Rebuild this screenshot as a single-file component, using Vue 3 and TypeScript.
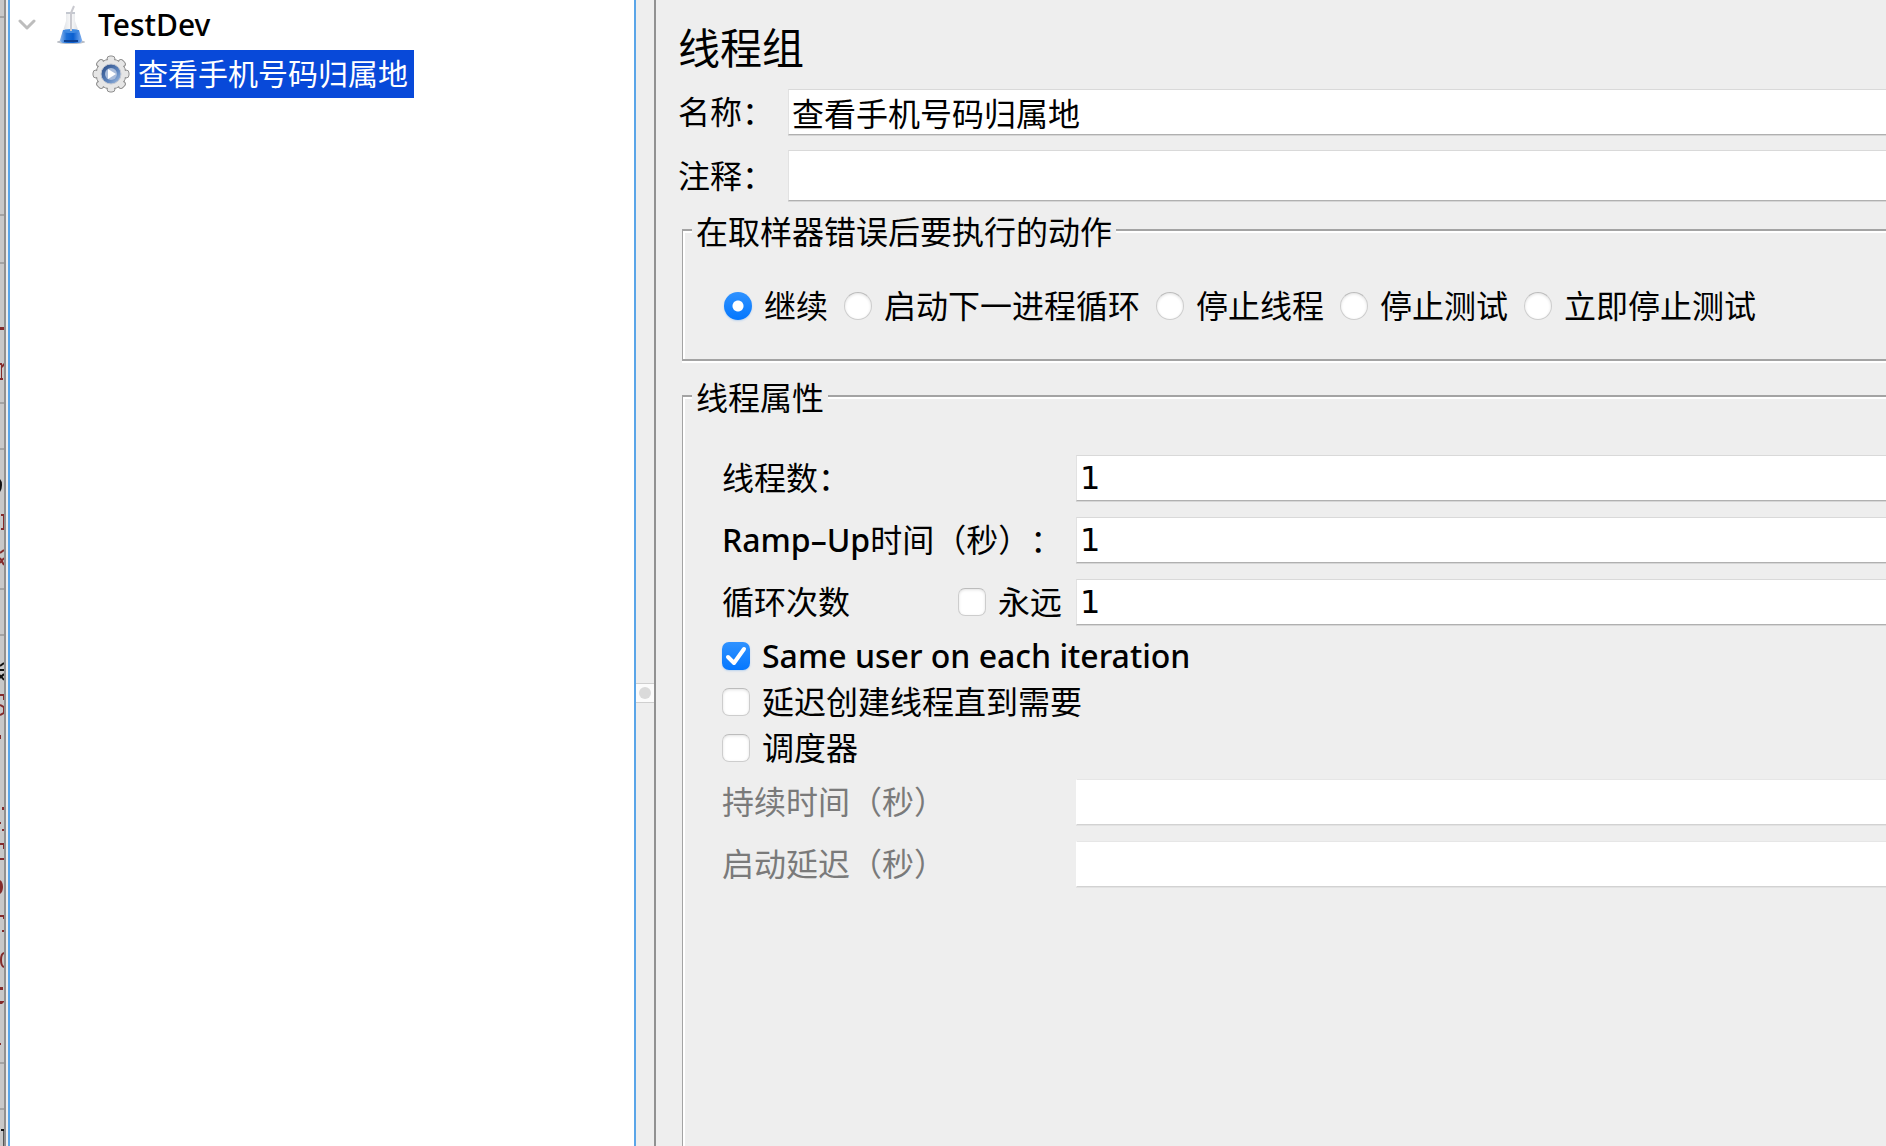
<script setup lang="ts">
import { ref } from 'vue'

interface Option {
  value: string
  label: string
}

const name = ref('查看手机号码归属地')
const comment = ref('')
const expanded = ref(true)

const actions: Option[] = [
  { value: 'continue', label: '继续' },
  { value: 'next-loop', label: '启动下一进程循环' },
  { value: 'stop-thread', label: '停止线程' },
  { value: 'stop-test', label: '停止测试' },
  { value: 'stop-now', label: '立即停止测试' },
]
const action = ref('continue')

const threads = ref('1')
const rampUp = ref('1')
const loops = ref('1')
const forever = ref(false)
const sameUser = ref(true)
const delayedStart = ref(false)
const scheduler = ref(false)
const duration = ref('')
const startupDelay = ref('')

const ruleLines = [16, 214, 262, 402, 448, 588, 634, 1062, 1108]
</script>

<template>
  <div class="app" lang="zh-CN">
    <!-- Sliver of the window lying behind this one -->
    <div class="backdrop" aria-hidden="true">
      <svg width="4" height="1146" viewBox="0 0 4 1146">
        <rect v-for="y in ruleLines" :key="y" x="0" :y="y" width="4" height="2" fill="#a3a3a3" />
        <g fill="#852b2b">
          <rect x="0" y="327" width="4" height="3" />
          <path d="M0 363h2v2l2-2v3l-2 2v10h1v2h-3v-2h1v-13h-1z" />
          <path d="M1 514h3v16h-3v-2h2v-12h-2z" />
          <rect x="0" y="735" width="1" height="4" />
          <rect x="2" y="807" width="2" height="3" />
          <rect x="0" y="822" width="1" height="2" />
          <rect x="2" y="829" width="2" height="2" />
          <path d="M0 843h4v6h-1v-4h-3z" />
          <path d="M0 858h4v2h-4z" />
          <path d="M0 880q3 2 3 7t-3 7z" />
          <path d="M0 915h4v4h-1v-2h-3z" />
          <rect x="2" y="930" width="2" height="2" />
          <rect x="0" y="987" width="3" height="3" />
          <path d="M0 1001h4v1l-2 2h-2z" />
          <rect x="0" y="1043" width="1" height="2" />
        </g>
        <g fill="none" stroke="#852b2b" stroke-width="2">
          <path d="M4 550l-4 3M0 558l4 7M4 558l-4 5" />
          <path d="M0 695h4v5M0 705l4 2v6l-4 2" />
          <path d="M4 953q-3 1-3 7t3 7" />
        </g>
        <g fill="none" stroke="#111" stroke-width="2">
          <path d="M4 663l-4 3M0 670h4M0 675l4 5M4 674l-4 4" />
          <path d="M1 1130h3" />
        </g>
        <path d="M3 1131h1v15h-1z" fill="#555" />
        <path d="M0 479q2 2 2 6t-2 7z" fill="#111" />
      </svg>
    </div>

    <nav class="tree-pane" aria-label="测试计划">
      <ul class="tree">
        <li>
          <div class="node">
            <button class="toggle" type="button" aria-label="展开" :aria-expanded="expanded" @click="expanded = !expanded">
              <svg width="18" height="12" viewBox="0 0 18 12">
                <path d="M2 2l7 7 7-7" fill="none" stroke="#bdbdbd" stroke-width="3" stroke-linecap="round" stroke-linejoin="round" />
              </svg>
            </button>
            <svg class="flask" width="30" height="40" viewBox="0 0 30 40">
              <defs>
                <linearGradient id="flask-liquid" x1="0" x2="1">
                  <stop offset="0" stop-color="#8fb9ee" />
                  <stop offset=".3" stop-color="#1c6fd6" />
                  <stop offset=".6" stop-color="#0a5fd0" />
                  <stop offset="1" stop-color="#7fb0f0" />
                </linearGradient>
                <linearGradient id="flask-glass" x1="0" x2="1">
                  <stop offset="0" stop-color="#d4d8de" />
                  <stop offset=".5" stop-color="#fafafa" />
                  <stop offset="1" stop-color="#cfd3da" />
                </linearGradient>
              </defs>
              <ellipse cx="14" cy="37" rx="14" ry="2" fill="#b8bcc4" />
              <path d="M9 8h9v8l7 20q0 2-3 2h-16q-3 0-3-2l6-20z" fill="url(#flask-glass)" />
              <path d="M6 25h16l3 10q0 3-3 3h-16q-3 0-3-3z" fill="url(#flask-liquid)" />
              <ellipse cx="14" cy="26" rx="8" ry="2" fill="#3f8ae2" />
              <path d="M7 36h14" stroke="#0c3f92" stroke-width="2" />
              <path d="M9 8h9" stroke="#c4c8d0" stroke-width="2" />
              <path d="M17 1l-3 7v18" fill="none" stroke="#c9c9cf" stroke-width="2" />
            </svg>
            <span class="node-label latin">TestDev</span>
          </div>
          <ul v-if="expanded" class="tree">
            <li class="node child">
              <svg width="38" height="38" viewBox="0 0 38 38">
                <defs>
                  <linearGradient id="gear-hub" x1="0" y1="0" x2="1" y2="1">
                    <stop offset="0" stop-color="#25467f" />
                    <stop offset=".6" stop-color="#5f86bf" />
                    <stop offset="1" stop-color="#a9c3e4" />
                  </linearGradient>
                </defs>
                <g fill="#e6e6e6" stroke="#8f8f8f" stroke-width="1">
                  <rect v-for="a in 8" :key="a" x="15" y="1" width="8" height="10" rx="3" :transform="`rotate(${a * 45} 19 19)`" />
                  <circle cx="19" cy="19" r="15" />
                </g>
                <g fill="#e6e6e6">
                  <rect v-for="a in 8" :key="a" x="16" y="2" width="6" height="10" rx="2" :transform="`rotate(${a * 45} 19 19)`" />
                </g>
                <circle cx="19" cy="19" r="10" fill="url(#gear-hub)" stroke="#c3c8d2" stroke-width="1" />
                <circle cx="19" cy="19" r="6" fill="#a9bcda" />
                <path d="M16 14l8 5-8 5z" fill="#fff" />
              </svg>
              <span class="node-label selected">查看手机号码归属地</span>
            </li>
          </ul>
        </li>
      </ul>
    </nav>

    <div class="splitter" role="separator" aria-orientation="vertical">
      <div class="grip"><span class="dot"></span></div>
    </div>

    <main class="panel">
      <h1 class="title">线程组</h1>

      <div class="meta-row">
        <label for="name">名称：</label>
        <input id="name" v-model="name" class="field" type="text" />
      </div>
      <div class="meta-row">
        <label for="comment">注释：</label>
        <input id="comment" v-model="comment" class="field tall" type="text" />
      </div>

      <fieldset class="group">
        <legend>在取样器错误后要执行的动作</legend>
        <div class="radios">
          <label v-for="o in actions" :key="o.value" class="option">
            <input v-model="action" class="tick round" type="radio" name="on-error" :value="o.value" />
            <span>{{ o.label }}</span>
          </label>
        </div>
      </fieldset>

      <fieldset class="group fill">
        <legend>线程属性</legend>
        <div class="props">
          <div class="prop-row">
            <label class="prop-label" for="threads">线程数：</label>
            <input id="threads" v-model="threads" class="field number" type="text" />
          </div>
          <div class="prop-row">
            <label class="prop-label" for="ramp-up"><span class="latin">Ramp–Up</span>时间（秒）：</label>
            <input id="ramp-up" v-model="rampUp" class="field number" type="text" />
          </div>
          <div class="prop-row">
            <div class="prop-label with-check">
              <label for="loops">循环次数</label>
              <label class="option">
                <input v-model="forever" class="tick" type="checkbox" />
                <span>永远</span>
              </label>
            </div>
            <input id="loops" v-model="loops" class="field number" type="text" />
          </div>
          <div class="checks">
            <label class="option">
              <input v-model="sameUser" class="tick" type="checkbox" />
              <span class="latin">Same user on each iteration</span>
            </label>
            <label class="option">
              <input v-model="delayedStart" class="tick" type="checkbox" />
              <span>延迟创建线程直到需要</span>
            </label>
            <label class="option">
              <input v-model="scheduler" class="tick" type="checkbox" />
              <span>调度器</span>
            </label>
          </div>
          <div class="prop-row">
            <label class="prop-label off" for="duration">持续时间（秒）</label>
            <input id="duration" v-model="duration" class="field number" type="text" :disabled="!scheduler" />
          </div>
          <div class="prop-row">
            <label class="prop-label off" for="delay">启动延迟（秒）</label>
            <input id="delay" v-model="startupDelay" class="field number" type="text" :disabled="!scheduler" />
          </div>
        </div>
      </fieldset>
    </main>
  </div>
</template>

<style>
body {
  margin: 0;
  background: #eee;
}
</style>

<style scoped>
.app {
  display: flex;
  height: 100vh;
  overflow: hidden;
  background: #eee;
  color: #000;
  font-family: 'Noto Sans', 'Noto Sans CJK SC', sans-serif;
  font-size: 32px;
  line-height: 36px;
  white-space: nowrap;
  text-spacing-trim: space-all;
}

.latin {
  font-weight: 500;
}

.backdrop {
  flex: none;
  width: 4px;
  overflow: hidden;
  background: #c8c8c8;
  border-right: 2px solid #909090;
}

.backdrop svg {
  display: block;
}

.tree-pane {
  flex: none;
  box-sizing: border-box;
  width: 628px;
  margin-left: 2px;
  background: #fff;
  border: solid #5aa5e8;
  border-width: 0 2px;
}

.tree {
  margin: 0;
  padding: 0;
  list-style: none;
  font-size: 30px;
}

.node {
  display: flex;
  align-items: center;
  height: 50px;
  padding-left: 8px;
}

.node-label {
  line-height: 48px;
}

.toggle {
  display: flex;
  padding: 0;
  border: 0;
  background: none;
}

.flask {
  margin: 0 11px 0 21px;
}

.node.child {
  height: 48px;
  padding-left: 82px;
}

.selected {
  margin-left: 5px;
  padding: 0 6px 0 3px;
  background: #0849d9;
  color: #fff;
}

.splitter {
  flex: none;
  width: 18px;
  border-right: 2px solid #919191;
}

.grip {
  display: flex;
  align-items: center;
  justify-content: center;
  height: 18px;
  margin-top: 683px;
  background: #fbfbfb;
  border: solid #cfcfcf;
  border-width: 1px 0;
}

.dot {
  width: 12px;
  height: 12px;
  border-radius: 50%;
  background: #dadada;
}

.panel {
  flex: 1;
  min-width: 0;
  display: flex;
  flex-direction: column;
  padding: 20px 0 0 22px;
}

.title {
  margin: 0 0 13px;
  font-size: 42px;
  font-weight: 400;
  line-height: 56px;
}

.meta-row {
  display: flex;
  align-items: center;
  margin-bottom: 15px;
}

.meta-row label {
  flex: none;
  width: 110px;
}

.meta-row + .meta-row {
  margin-bottom: 11px;
}

.field {
  flex: 1;
  min-width: 0;
  box-sizing: border-box;
  height: 46px;
  margin: 0;
  padding: 0 3px;
  border: solid;
  border-width: 1px 0 1px 1px;
  border-color: #d9d9d9 #d9d9d9 #b0b0b0 #e2e2e2;
  border-radius: 0;
  outline: 0;
  background: #fff;
  box-shadow: 0 1px 0 #d6d6d6;
  color: #000;
  font: inherit;
}

.field.number {
  font-family: 'DejaVu Sans', 'Noto Sans CJK SC', sans-serif;
}

.field.tall {
  height: 51px;
}

.field:disabled {
  border-color: #e6e6e6 #e6e6e6 #d2d2d2 #fff;
  box-shadow: 0 1px 0 #e2e2e2;
}

.group {
  min-width: 0;
  margin: 0 0 17px 4px;
  padding: 0 0 35px 9px;
  border: solid #a3a3a3;
  border-width: 2px 0 2px 1px;
  box-shadow: inset 2px 2px 0 #fff, 0 2px 0 #fff;
}

.group legend {
  padding: 4px 4px 0;
  line-height: 32px;
  background: #eee;
}

.group.fill {
  flex: 1;
  margin-bottom: 0;
  padding-bottom: 0;
  border-bottom: 0;
}

.radios {
  display: flex;
  gap: 16px;
  padding: 40px 0 0 32px;
}

.option {
  display: flex;
  align-items: center;
  gap: 12px;
}

.tick {
  appearance: none;
  flex: none;
  box-sizing: border-box;
  width: 28px;
  height: 28px;
  margin: 0;
  border: 1px solid #cdcdcd;
  border-top-color: #bcbcbc;
  border-radius: 7px;
  background: #fff;
  box-shadow: inset 0 1px 3px #e2e2e2;
}

.tick.round {
  border-radius: 50%;
}

.tick:checked {
  border: 0;
  background: linear-gradient(#2f92ff, #0477fe);
  box-shadow: 0 1px 2px #b9d2ee;
}

.tick.round:checked {
  background: radial-gradient(circle, #fff 5px, transparent 6px), linear-gradient(#2f92ff, #0477fe);
}

.tick:not(.round):checked {
  background:
    url("data:image/svg+xml,%3Csvg xmlns='http://www.w3.org/2000/svg' viewBox='0 0 28 28'%3E%3Cpath d='M6 15l6 6 10-14' fill='none' stroke='white' stroke-width='4' stroke-linecap='round' stroke-linejoin='round'/%3E%3C/svg%3E"),
    linear-gradient(#2f92ff, #0477fe);
}

.props {
  padding: 41px 0 0 30px;
}

.prop-row {
  display: flex;
  align-items: center;
  margin-bottom: 16px;
}

.prop-label {
  flex: none;
  box-sizing: border-box;
  width: 354px;
}

.with-check {
  display: flex;
  justify-content: space-between;
  padding-right: 14px;
}

.off {
  color: #7a7a7a;
}

.checks {
  display: flex;
  flex-direction: column;
  align-items: flex-start;
  margin: -8px 0 8px;
}

.checks .option {
  height: 46px;
}
</style>
